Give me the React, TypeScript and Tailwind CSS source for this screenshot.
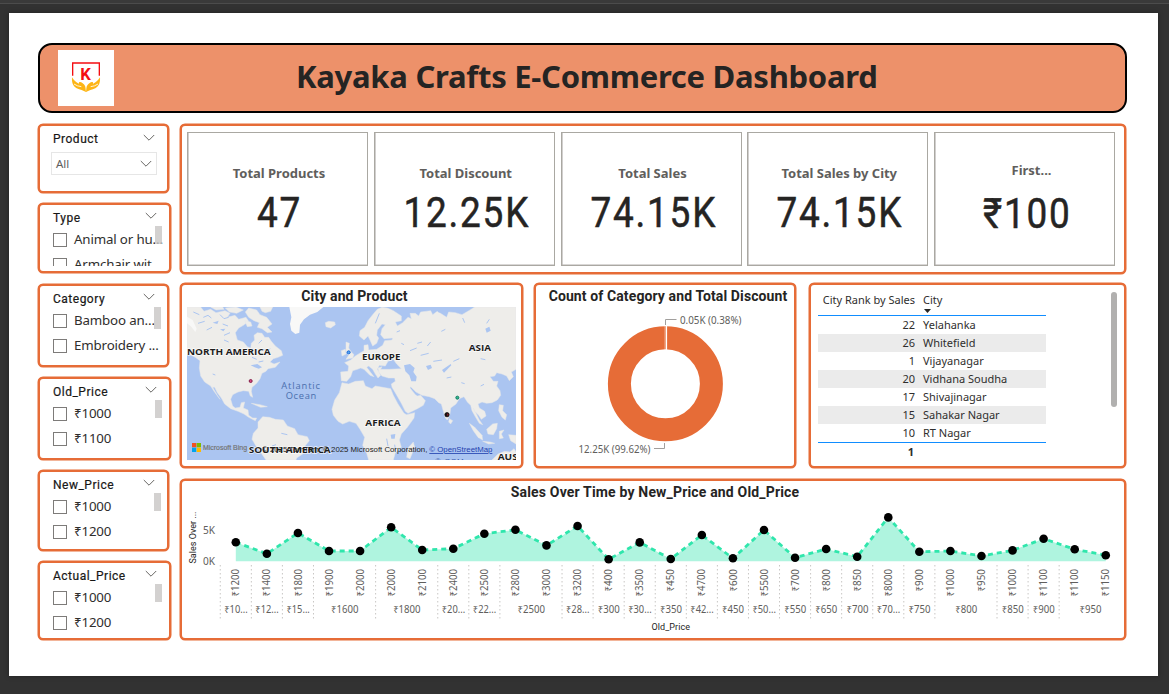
import React from "react";

const DIN = "font-[Roboto,'Noto_Sans',sans-serif]";
const PANEL = "box-border rounded-[5px] border-2 border-[#E66C37] bg-white shadow-[0_0_0_0.5px_#E66C37]";

function Chevron({ className = "" }: { className?: string }) {
  return (
    <svg className={className} width="12" height="8" viewBox="0 0 12 8" fill="none">
      <path d="M0.8 1 L6 6.2 L11.2 1" stroke="#605E5C" strokeWidth="0.95" />
    </svg>
  );
}

function Slicer({
  title,
  items,
  size,
  clipped,
  thumb = "right-[7px] h-[18px]",
}: {
  title: string;
  items: string[];
  size: string;
  clipped?: boolean;
  thumb?: string;
}) {
  return (
    <section className={`${PANEL} ${size} relative overflow-hidden pl-[13px]`}>
      <div className="flex h-[25px] items-center justify-between pr-[12px]">
        <h2 className={`${DIN} text-[12px] font-normal tracking-[0.5px] text-[#151413] [-webkit-text-stroke:0.2px_#252423]`}>
          {title}
        </h2>
        <Chevron className="-mt-[3px]" />
      </div>
      <ul className={clipped ? "h-[36px] overflow-hidden pt-px" : "pt-[1.5px]"}>
        {items.map((t) => (
          <li key={t} className="-mt-[4px] mb-[4px] flex h-[25px] items-center gap-[7px]">
            <span className="h-[14px] w-[14px] shrink-0 border border-[#7d7b79]" />
            <span className="whitespace-nowrap font-['Noto_Sans',sans-serif] text-[13.3px] tracking-[-0.15px] text-[#2f2e2d]">
              {t}
            </span>
          </li>
        ))}
      </ul>
      <span className={`absolute top-[21px] w-[7px] bg-[#c8c6c4]/80 ${thumb}`} />
    </section>
  );
}

function Logo() {
  return (
    <div className="flex h-[56px] w-[56px] items-center justify-center bg-white">
      <svg width="56" height="56" viewBox="0 0 168 168">
        <path d="M44 77 V39 H124 V77" fill="none" stroke="#f40d12" strokeWidth="4" />
        <text x="83" y="91" textAnchor="middle" fontFamily="Roboto, sans-serif" fontWeight="700" fontSize="50" fill="#f40d12">
          K
        </text>
        <path
          d="M42 82 C47 91 54 97 63 101 C61 95 68 95 74 100 C82 106 84 112 84 126 C76 121 66 120 56 115 C44 108 41 97 42 82Z"
          fill="#fdb515"
        />
        <path
          d="M126 82 C121 91 114 97 105 101 C107 95 100 95 94 100 C86 106 84 112 84 126 C92 121 102 120 112 115 C124 108 127 97 126 82Z"
          fill="#fdb515"
        />
        <path d="M48 102 Q58 109 70 110 M120 102 Q110 109 98 110" fill="none" stroke="#fff" strokeWidth="2.5" />
        <path d="M84 106 V122" stroke="#fff" strokeWidth="1.5" />
      </svg>
    </div>
  );
}

const KPIS = [
  { label: "Total Products", value: "47" },
  { label: "Total Discount", value: "12.25K" },
  { label: "Total Sales", value: "74.15K" },
  { label: "Total Sales by City", value: "74.15K" },
  { label: "First...", value: "₹100" },
];

function Kpis() {
  return (
    <section className={`${PANEL} flex h-[150px] gap-[5.75px] pl-[5px] pt-[6px]`}>
      {KPIS.map((k, i) => (
        <div
          key={i}
          className={`flex h-[134px] w-[181px] flex-col items-center border border-[#aaa8a2] shadow-[inset_0.6px_-0.6px_0_0_#b3b0ad] ${
            i === 4 ? "pl-[6px] pt-[27px]" : "pl-[3px] pt-[30px]"
          }`}
        >
          <div
            className={`h-[20px] whitespace-nowrap font-['Noto_Sans',sans-serif] text-[13px] font-bold leading-[20px] tracking-[-0.02px] text-[#605E5C] ${
              i === 4 ? "pl-[8px]" : ""
            }`}
          >
            {k.label}
          </div>
          <div
            className={`${DIN} h-[50px] origin-center scale-x-[0.88] text-[42px] font-normal leading-[50px] tracking-[2px] text-[#252423] [-webkit-text-stroke:0.5px_#252423] ${
              i === 4 ? "mt-[9px]" : "mt-[5px] pl-[2px]"
            }`}
          >
            {k.value}
          </div>
        </div>
      ))}
    </section>
  );
}

const LAND = [
  "M21 81 H62 L72 94 92 88 108 98 135 92 150 100 142 112 165 106 176 118 198 112 206 124 190 136 176 144 166 158 172 180 190 186 202 200 212 204 214 190 224 180 222 166 232 158 246 160 254 172 266 172 274 184 286 198 304 212 308 226 294 232 280 236 270 246 282 252 300 246 286 262 264 266 258 274 246 280 240 296 230 310 216 322 214 334 218 352 211 348 206 334 190 332 174 336 158 344 152 358 158 378 166 384 180 382 184 368 194 366 190 384 204 390 206 406 218 414 230 414 226 422 206 412 192 402 174 394 152 386 134 372 124 354 112 338 104 322 98 322 112 346 120 358 102 334 92 318 74 306 62 288 58 264 60 242 46 232 34 226 21 222Z",
  "M206 84 L230 90 240 104 260 112 276 132 262 142 276 156 262 158 246 146 232 142 238 128 222 122 206 112 196 96Z",
  "M92 81 H128 L132 88 108 90Z",
  "M136 84 L168 81 190 90 170 100 148 96Z",
  "M240 81 H278 L272 94 256 98 246 94Z",
  "M194 122 L212 126 216 138 202 140Z",
  "M436 128 L446 124 464 126 466 134 452 144 438 140Z",
  "M498 186 L508 190 506 204 514 216 522 224 518 234 498 238 506 226 498 212Z",
  "M484 212 L496 208 498 222 486 228Z",
  "M538 168 L540 152 554 142 564 122 578 104 592 88 606 82 622 84 640 92 664 108 664 122 646 126 652 138 668 128 684 112 694 116 690 100 706 100 716 108 722 96 752 92 758 104 772 94 800 112 806 96 826 98 846 104 870 90 884 81 H1008 V268 L994 276 1000 290 988 302 980 288 966 282 950 278 944 288 930 290 940 304 954 304 950 318 960 332 962 346 952 360 936 368 920 370 906 366 894 372 898 384 914 394 918 408 904 418 896 406 884 394 880 384 888 400 898 420 908 434 898 430 886 410 876 392 872 376 862 366 852 350 838 356 828 372 812 384 810 402 802 420 796 414 790 394 784 372 776 368 764 356 748 350 726 346 708 336 692 320 690 324 706 344 712 348 722 346 736 362 730 376 712 386 684 400 676 394 664 370 648 342 636 322 634 312 646 304 644 294 626 294 606 288 596 276 594 264 606 260 602 268 630 268 664 266 650 252 640 238 624 244 616 258 598 256 592 268 602 286 594 294 586 282 578 268 566 258 560 262 574 280 582 290 570 286 552 268 542 264 532 268 518 272 512 290 500 304 484 302 482 276 504 274 506 258 494 248 512 240 526 228 542 218 552 212 552 196 564 194 566 210 590 208 608 196 614 182 636 180 638 174 612 176 602 164 606 146 616 134 606 132 592 150 590 166 596 174 590 190 578 198 570 180 564 168 552 180Z",
  "M486 308 L506 312 526 304 550 302 556 318 576 326 586 318 608 322 632 326 640 346 654 372 672 400 680 404 704 398 702 414 682 442 664 462 658 480 664 502 646 518 640 540 H566 L560 520 548 496 554 472 540 448 528 430 508 424 488 432 474 424 460 406 456 388 464 360 478 338Z",
  "M234 426 L248 410 268 412 286 418 310 420 322 438 344 446 354 464 382 470 388 482 372 502 368 522 350 534 348 540 H258 L244 520 228 498 216 478 220 460 234 444Z",
  "M684 504 L700 486 704 502 690 536 680 532Z",
  "M868 430 L884 442 906 466 908 480 894 472 880 452Z",
  "M920 448 L938 432 952 430 950 446 940 464 924 462Z",
  "M908 484 L930 486 944 490 926 492Z",
  "M958 454 L972 450 964 462 970 474 958 476Z",
  "M958 374 L970 376 968 392 980 404 976 420 966 412 956 392Z",
  "M986 464 L1008 466 1008 492 992 482Z",
  "M936 540 L954 522 974 514 990 516 1002 506 1008 516 V540Z",
  "M808 416 L818 422 812 432 806 426Z",
  "M214 370 L240 374 262 380 242 382Z",
];
const WATER = [
  "M672 256 L690 252 704 264 700 276 710 290 708 304 694 304 688 286 676 274Z",
  "M738 258 L752 254 756 264 744 270Z",
  "M786 270 L812 252 814 256 792 278Z",
  "M868 204 L888 194 890 200 872 212Z",
  "M916 146 L928 140 932 152 920 158Z",
  "M212 256 L232 252 246 262 236 266 224 262Z",
  "M632 464 L646 462 644 476 634 476Z",
  "M98 128 L116 122 112 132Z",
  "M120 148 L136 146 130 154Z",
];
const CREEKS =
  "M40 96 l18 8 M70 112 l14 -6 10 8 M120 104 l12 12 14 -4 M54 130 l20 -6 M80 150 l16 -8 M128 132 l16 6 M150 158 l-18 8 M132 180 l14 6 M150 204 l8 20 M180 212 l12 6 M236 190 l10 -10 M246 212 l12 -4 M270 206 l-14 16 M216 232 l14 6 M236 246 l14 -3 M98 282 l8 3 M598 100 l-12 30 M650 156 l10 -4 M664 190 l8 4 M690 212 l20 -8 M712 190 l14 -4 M722 226 l24 -6 M752 186 l-10 12 M784 154 l12 -6 M760 244 l26 -4 M820 244 l18 -8 M902 236 l14 3 M928 118 l-8 12 M848 114 l6 14 M766 84 l12 14 M788 90 l20 -4 M632 428 l4 10 M620 476 l4 22 M644 494 l3 20 M800 294 l14 -3 M844 308 l10 3 M902 318 l10 -5 M304 460 l18 4 M276 498 l12 -4";

function WorldMap() {
  const label = {
    fontFamily: "'Open Sans', sans-serif",
    fontWeight: 700,
    fontSize: 28.5,
    fill: "#1d1d1d",
    stroke: "#fff",
    strokeWidth: 4,
    strokeOpacity: 0.75,
    paintOrder: "stroke",
    lengthAdjust: "spacingAndGlyphs" as const,
  };
  return (
    <svg className="block" width="329" height="153" viewBox="21 81 987 459" preserveAspectRatio="none">
      <rect x="21" y="81" width="987" height="459" fill="#abc5f1" />
      <g fill="#eeedea" stroke="#e4e6e8" strokeWidth="1.5" strokeLinejoin="round">
        {LAND.map((d) => (
          <path key={d} d={d} />
        ))}
      </g>
      <path d="M328 81 H430 L412 96 390 104 372 118 360 134 358 158 346 162 334 152 330 132 334 112Z" fill="#f8f8f7" />
      <path d="M21 110 L38 120 50 146 46 156 34 140 21 130Z" fill="#f8f8f7" />
      <g fill="#abc5f1">
        {WATER.map((d) => (
          <path key={d} d={d} />
        ))}
      </g>
      <path d={CREEKS} fill="none" stroke="#abc5f1" strokeWidth="3" />
      <text x="21" y="224" textLength="251" {...label}>NORTH AMERICA</text>
      <text x="546" y="239" textLength="115" {...label}>EUROPE</text>
      <text x="866" y="213" textLength="67" {...label}>ASIA</text>
      <text x="556" y="437" textLength="106" {...label}>AFRICA</text>
      <text x="206" y="519" textLength="246" {...label}>SOUTH AMERICA</text>
      <text x="953" y="539" textLength="60" {...label}>AUS</text>
      <g fontFamily="'Open Sans', sans-serif" fontSize="28" fill="#4a6fae">
        <text x="304" y="326" textLength="116">Atlantic</text>
        <text x="317" y="356" textLength="92">Ocean</text>
      </g>
      <g>
        <rect x="36" y="489" width="13" height="13" fill="#f25022" />
        <rect x="50" y="489" width="13" height="13" fill="#7fba00" />
        <rect x="36" y="503" width="13" height="13" fill="#00a4ef" />
        <rect x="50" y="503" width="13" height="13" fill="#ffb900" />
      </g>
      <g fontFamily="'Liberation Sans', sans-serif">
        <text x="69" y="511" fontSize="24" fill="#737373" stroke="#737373" strokeWidth="0.6" textLength="132" lengthAdjust="spacingAndGlyphs">Microsoft Bing</text>
        <text x="246" y="516" fontSize="24" fill="#222" textLength="496" lengthAdjust="spacingAndGlyphs">© 2025 TomTom, © 2025 Microsoft Corporation,</text>
        <text x="748" y="516" fontSize="24" fill="#1f3fae" textDecoration="underline" textLength="189" lengthAdjust="spacingAndGlyphs">© OpenStreetMap</text>
        <text x="765" y="552" fontSize="24" fill="#3f5fb0" textLength="86">© OSM</text>
      </g>
      <circle cx="506" cy="217" r="4.5" fill="#5aa5ee" stroke="#1668d8" strokeWidth="3" />
      <circle cx="212" cy="303" r="4.5" fill="#d6457c" stroke="#86204a" strokeWidth="3" />
      <circle cx="832" cy="353" r="4.5" fill="#35b88f" stroke="#0d7c63" strokeWidth="3" />
      <circle cx="801" cy="404" r="6.5" fill="#1c1214" stroke="#000" strokeWidth="2" />
      <path d="M801 400 L806 404 803 408Z" fill="#b3202c" />
    </svg>
  );
}

function Donut() {
  return (
    <svg className="block" width="258" height="158" viewBox="536 307 258 158">
      <circle cx="665.4" cy="383.8" r="46" fill="none" stroke="#E66C37" strokeWidth="23" />
      <path d="M666.4 326 V350" stroke="#fff" strokeWidth="1.4" />
      <path d="M664.9 326 V350" stroke="#fff" strokeOpacity="0.5" strokeWidth="0.7" />
      <path d="M665.5 325 V319.5 H676.5 M664.5 443 V448.5 H654" fill="none" stroke="#a19f9d" strokeWidth="1" />
      <g fontFamily="'Noto Sans', sans-serif" fontSize="10" fill="#605E5C">
        <text x="680" y="324" textLength="61.5" lengthAdjust="spacingAndGlyphs">0.05K (0.38%)</text>
        <text x="578.5" y="453" textLength="72" lengthAdjust="spacingAndGlyphs">12.25K (99.62%)</text>
      </g>
    </svg>
  );
}

const ROWS: [number, string][] = [
  [22, "Yelahanka"],
  [26, "Whitefield"],
  [1, "Vijayanagar"],
  [20, "Vidhana Soudha"],
  [17, "Shivajinagar"],
  [15, "Sahakar Nagar"],
  [10, "RT Nagar"],
];

function CityTable() {
  return (
    <section
      className={`${PANEL} flex h-[185px] w-[317px] justify-between pl-[7px] pr-[7px] pt-[7px] font-['Noto_Sans',sans-serif] text-[11px] text-[#2f2e2d]`}
    >
      <div className="w-[228px]">
        <div className="flex h-[24px] border-b border-[#118DFF]">
          <div className="w-[97px] whitespace-nowrap text-right leading-[16px]">City Rank by Sales</div>
          <div className="pl-[8px] leading-[16px]">
            City
            <svg className="ml-[1px] mt-[1px] block" width="7" height="4" viewBox="0 0 7 4">
              <path d="M0 0 H7 L3.5 4Z" fill="#252423" />
            </svg>
          </div>
        </div>
        <div className="border-b border-[#118DFF]">
          {ROWS.map(([rank, city], i) => (
            <div key={city} className={`flex h-[18.05px] items-center ${i % 2 ? "bg-[#ebebeb]" : ""}`}>
              <span className="w-[97px] text-right">{rank}</span>
              <span className="pl-[8px]">{city}</span>
            </div>
          ))}
        </div>
        <div className="flex h-[18px] items-center font-bold">
          <span className="w-[96px] text-right">1</span>
        </div>
      </div>
      <div className="h-[115px] w-[6px] rounded-full bg-[#b1b0af]" />
    </section>
  );
}

const POINTS: [string, number][] = [
  ["₹1200", 542.3], ["₹1400", 553.7], ["₹1800", 533], ["₹1900", 551], ["₹2000", 551],
  ["₹2000", 527.3], ["₹2100", 550], ["₹2400", 548.7], ["₹2500", 533.7], ["₹2800", 529.8],
  ["₹3000", 545.4], ["₹3200", 526], ["₹400", 559.3], ["₹3500", 542.4], ["₹450", 559],
  ["₹4700", 535], ["₹600", 558.3], ["₹5500", 530], ["₹700", 557.7], ["₹800", 549],
  ["₹850", 556.7], ["₹8000", 517.4], ["₹900", 551.8], ["₹1000", 551], ["₹950", 556],
  ["₹1000", 550.4], ["₹1100", 538.7], ["₹1100", 549.3], ["₹1150", 555.2],
];
const GROUPS: [string, number][] = [
  ["₹10...", 1], ["₹12...", 1], ["₹15...", 1], ["₹1600", 2], ["₹1800", 2], ["₹20...", 1],
  ["₹22...", 1], ["₹2500", 2], ["₹28...", 1], ["₹300", 1], ["₹30...", 1], ["₹350", 1],
  ["₹42...", 1], ["₹450", 1], ["₹50...", 1], ["₹550", 1], ["₹650", 1], ["₹700", 1],
  ["₹70...", 1], ["₹750", 1], ["₹800", 2], ["₹850", 1], ["₹900", 1], ["₹950", 2],
];
const STEP = 31.07;
const px = (i: number) => 235.8 + STEP * i;

function SalesChart() {
  const line = POINTS.map(([, y], i) => `${px(i)} ${y}`).join(" L");
  let at = 0;
  return (
    <svg className="block" width="943" height="135" viewBox="182 503 943 135">
      <path d={`M${px(0)} 561.2 L${line} L${px(28)} 561.2Z`} fill="#aff4df" />
      <path d={`M${line}`} fill="none" stroke="#2fe6ac" strokeWidth="2.8" strokeDasharray="5 4" />
      {POINTS.map(([, y], i) => (
        <circle key={i} cx={px(i)} cy={y} r="4.3" fill="#000" />
      ))}
      <g fontFamily="'Noto Sans', sans-serif" fontSize="10" fill="#605E5C">
        <text x="203" y="534" textLength="12" lengthAdjust="spacingAndGlyphs">5K</text>
        <text x="203" y="565" textLength="12" lengthAdjust="spacingAndGlyphs">0K</text>
        {POINTS.map(([t], i) => (
          <text
            key={i}
            transform={`translate(${px(i) + 3.6} 569) rotate(-90)`}
            textAnchor="end"
            textLength={t.length === 5 ? 27.5 : 22.5}
            lengthAdjust="spacingAndGlyphs"
          >
            {t}
          </text>
        ))}
        {GROUPS.map(([t, n], i) => {
          const x0 = px(at) - STEP / 2;
          at += n;
          return (
            <g key={i}>
              <path d={`M${x0} 565 V619`} stroke="#c8c6c4" strokeWidth="1" strokeDasharray="1.5 2.5" />
              <text
                x={x0 + (STEP * n) / 2 + 0.2}
                y="613"
                textAnchor="middle"
                textLength={t.length === 5 ? 27.5 : t.length === 6 ? 23.5 : 22}
                lengthAdjust="spacingAndGlyphs"
              >
                {t}
              </text>
            </g>
          );
        })}
      </g>
      <g fontFamily="Roboto, sans-serif" fontSize="9" fill="#252423">
        <text transform="translate(196 563.5) rotate(-90)" textLength="52">Sales Over ...</text>
        <text x="651.5" y="630" textLength="38.5">Old_Price</text>
      </g>
    </svg>
  );
}

const CHART_TITLE = `${DIN} h-[22px] pt-px text-center text-[14px] font-bold leading-[20px] whitespace-nowrap text-[#252423]`;

export default function App() {
  return (
    <div className="h-[694px] w-[1169px] overflow-hidden bg-[#323232]">
      <div className="h-[4px] border-b border-[#4c4c4c] bg-[#3a3a3a]" />
      <main className="ml-[9px] mt-[9px] h-[663px] w-[1149px] bg-white pl-[29px] pt-[30px] shadow-[0_0_5px_rgba(0,0,0,0.35)]">
        <header className="flex h-[70px] w-[1089px] items-center rounded-[14px] border-2 border-black bg-[#ED916A] pl-[18px]">
          <Logo />
          <h1 className="-mt-[4px] ml-[182px] whitespace-nowrap font-['Noto_Sans',sans-serif] text-[31px] font-bold tracking-[-0.27px] text-[#252423]">
            Kayaka Crafts E-Commerce Dashboard
          </h1>
        </header>

        <div className="mt-[11px] flex">
          <aside className="flex w-[142px] flex-col">
            <section className={`${PANEL} h-[69px] w-[131px] pl-[13px] pr-[12px]`}>
              <div className="flex h-[25px] items-center justify-between">
                <h2 className={`${DIN} text-[12px] font-normal tracking-[0.5px] text-[#151413] [-webkit-text-stroke:0.2px_#252423]`}>
                  Product
                </h2>
                <Chevron className="-mt-[2px]" />
              </div>
              <div className="-ml-[2px] mt-[1px] flex h-[23px] w-[106px] items-center justify-between border border-[#e6e6e6] pl-[4px] pr-[4px] pt-px font-['Noto_Sans',sans-serif] text-[11.5px] text-[#605E5C]">
                All
                <Chevron />
              </div>
            </section>
            <Slicer title="Type" items={["Animal or hu...", "Armchair wit"]} size="mt-[10px] h-[70px] w-[133px]" clipped />
            <Slicer
              title="Category"
              items={["Bamboo an...", "Embroidery ..."]}
              size="mt-[11px] h-[83px] w-[131px]"
              thumb="right-[6px] h-[22px]"
            />
            <Slicer title="Old_Price" items={["₹1000", "₹1100"]} size="mt-[10px] h-[83px] w-[133px]" />
            <Slicer
              title="New_Price"
              items={["₹1000", "₹1200"]}
              size="mt-[10px] h-[81px] w-[131px]"
              thumb="right-[6px] h-[18px]"
            />
            <Slicer title="Actual_Price" items={["₹1000", "₹1200"]} size="mt-[10px] h-[79px] w-[133px]" />
          </aside>

          <div className="flex w-[946px] flex-col">
            <Kpis />
            <div className="mt-[9px] flex">
              <section className={`${PANEL} h-[185px] w-[343px] pl-[5px]`}>
                <h2 className={`${CHART_TITLE} w-[335px] tracking-[0.12px]`}>City and Product</h2>
                <WorldMap />
              </section>
              <section className={`${PANEL} ml-[11px] mr-[13px] h-[185px] w-[262px]`}>
                <h2 className={`${CHART_TITLE} ml-[6px] tracking-[0.11px]`}>Count of Category and Total Discount</h2>
                <Donut />
              </section>
              <CityTable />
            </div>
            <section className={`${PANEL} mt-[11px] h-[161px]`}>
              <h2 className={`${CHART_TITLE} pl-[4px] tracking-[0.17px]`}>Sales Over Time by New_Price and Old_Price</h2>
              <SalesChart />
            </section>
          </div>
        </div>
      </main>
    </div>
  );
}
